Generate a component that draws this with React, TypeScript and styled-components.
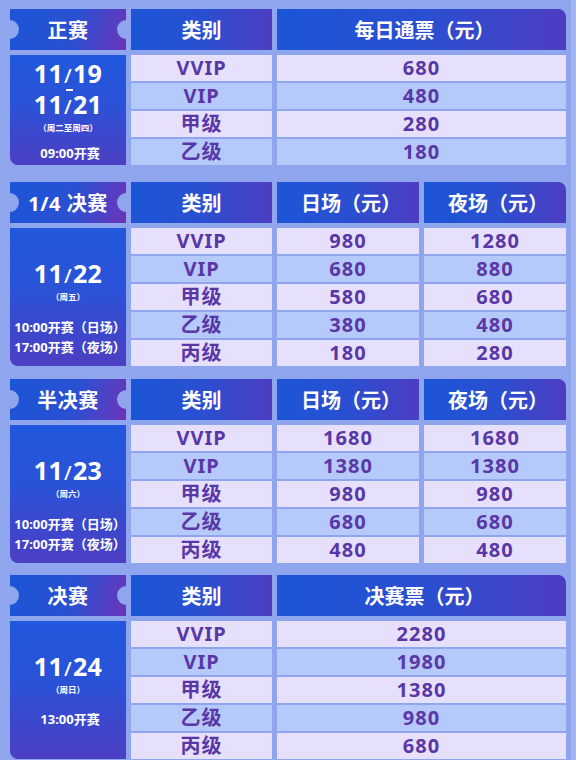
import React from "react";
import styled, { createGlobalStyle } from "styled-components";

const GlobalStyle = createGlobalStyle`
  html, body {
    margin: 0;
    padding: 0;
    background: #a4b5f4;
  }
  body {
    font-family: "Noto Sans", "Noto Sans CJK SC", sans-serif;
  }
`;

const PANEL = "#8fa5ee";

const Page = styled.div`
  width: 571px;
  min-height: 760px;
  background: ${PANEL};
  padding: 9px 5px 0 10px;
  box-sizing: border-box;
  overflow: hidden;
`;

const Section = styled.section<{ $cols: number; $rows: number; $gapAfter: number }>`
  display: grid;
  grid-template-columns: 116px 141px repeat(${(p) => p.$cols}, 1fr);
  grid-template-rows: 44px repeat(${(p) => p.$rows}, 26px);
  column-gap: 5px;
  row-gap: 2px;
  margin-bottom: ${(p) => p.$gapAfter}px;
`;

const Tab = styled.div`
  position: relative;
  overflow: hidden;
  margin-bottom: 3px;
  display: flex;
  align-items: center;
  justify-content: center;
  background: linear-gradient(105deg, #1c55d7 0%, #2a50d2 55%, #5a3cc0 88%, #6b34b6 100%);
  color: #fff;
  font-family: "Noto Sans CJK SC", sans-serif;
  font-weight: 700;
  font-size: 20px;
  letter-spacing: 0.5px;
  &::before,
  &::after {
    content: "";
    position: absolute;
    top: 50%;
    width: 19px;
    height: 19px;
    margin-top: -9.5px;
    border-radius: 50%;
    background: ${PANEL};
  }
  &::before {
    left: -10px;
  }
  &::after {
    right: -10px;
  }
`;

const TabLabel = styled.span`
  font-family: "Noto Sans", "Noto Sans CJK SC", sans-serif;
`;

const HeadCell = styled.div<{ $last?: boolean; $pad?: boolean }>`
  margin-bottom: 3px;
  display: flex;
  align-items: center;
  justify-content: center;
  background: linear-gradient(90deg, #1c55d7 0%, #2a4fd1 50%, #4d3dc2 100%);
  color: #fff;
  font-family: "Noto Sans CJK SC", sans-serif;
  font-weight: 700;
  font-size: 20px;
  border-top-right-radius: ${(p) => (p.$last ? "8px" : "0")};
  padding-left: ${(p) => (p.$pad ? "6px" : "0")};
`;

const DateBlock = styled.div<{ $rows: number; $padTop: number }>`
  grid-column: 1;
  grid-row: 2 / span ${(p) => p.$rows};
  display: flex;
  flex-direction: column;
  align-items: center;
  padding-top: ${(p) => p.$padTop}px;
  background: linear-gradient(180deg, #2158dd 0%, #2b52d7 45%, #3d47cc 75%, #4c3fc2 100%);
  border-bottom-left-radius: 8px;
  color: #fff;
`;

const DateLine = styled.div`
  font-family: "Noto Sans", sans-serif;
  font-weight: 700;
  font-size: 25px;
  line-height: 26px;
  letter-spacing: 0.3px;
`;

const Slash = styled.span`
  font-size: 20px;
  font-weight: 500;
  margin: 0 1px;
`;

const Dash = styled.div`
  width: 7px;
  height: 2px;
  background: #fff;
  margin: 0 0 0 2px;
`;

const Week = styled.div`
  font-family: "Noto Sans CJK SC", sans-serif;
  font-weight: 700;
  font-size: 8.5px;
  line-height: 12px;
  margin-top: 1px;
`;

const Times = styled.div<{ $gap: number }>`
  margin-top: ${(p) => p.$gap}px;
  display: flex;
  flex-direction: column;
  align-items: center;
`;

const TimeLine = styled.div`
  font-family: "Noto Sans", "Noto Sans CJK SC", sans-serif;
  font-weight: 700;
  font-size: 13px;
  line-height: 20px;
  white-space: nowrap;
  margin-left: 4px;
`;

const Cell = styled.div<{ $alt: boolean }>`
  display: flex;
  align-items: center;
  justify-content: center;
  background: ${(p) => (p.$alt ? "#b6c9fb" : "#e6e0fd")};
  color: #5937a7;
  font-family: "Noto Sans", "Noto Sans CJK SC", sans-serif;
  font-weight: 700;
  font-size: 20px;
  letter-spacing: 1px;
  line-height: 26px;
`;

type Sec = {
  tab: string;
  heads: string[];
  dates: string[];
  week: string;
  times: string[];
  rows: string[][];
  padTop: number;
  timesGap: number;
  gapAfter: number;
};

const sections: Sec[] = [
  {
    tab: "正赛",
    heads: ["每日通票（元）"],
    dates: ["11/19", "11/21"],
    week: "（周二至周四）",
    times: ["09:00开赛"],
    rows: [
      ["VVIP", "680"],
      ["VIP", "480"],
      ["甲级", "280"],
      ["乙级", "180"],
    ],
    padTop: 5,
    timesGap: 10,
    gapAfter: 17,
  },
  {
    tab: "1/4 决赛",
    heads: ["日场（元）", "夜场（元）"],
    dates: ["11/22"],
    week: "（周五）",
    times: ["10:00开赛（日场）", "17:00开赛（夜场）"],
    rows: [
      ["VVIP", "980", "1280"],
      ["VIP", "680", "880"],
      ["甲级", "580", "680"],
      ["乙级", "380", "480"],
      ["丙级", "180", "280"],
    ],
    padTop: 32,
    timesGap: 15,
    gapAfter: 13,
  },
  {
    tab: "半决赛",
    heads: ["日场（元）", "夜场（元）"],
    dates: ["11/23"],
    week: "（周六）",
    times: ["10:00开赛（日场）", "17:00开赛（夜场）"],
    rows: [
      ["VVIP", "1680", "1680"],
      ["VIP", "1380", "1380"],
      ["甲级", "980", "980"],
      ["乙级", "680", "680"],
      ["丙级", "480", "480"],
    ],
    padTop: 32,
    timesGap: 15,
    gapAfter: 12,
  },
  {
    tab: "决赛",
    heads: ["决赛票（元）"],
    dates: ["11/24"],
    week: "（周日）",
    times: ["13:00开赛"],
    rows: [
      ["VVIP", "2280"],
      ["VIP", "1980"],
      ["甲级", "1380"],
      ["乙级", "980"],
      ["丙级", "680"],
    ],
    padTop: 32,
    timesGap: 14,
    gapAfter: 0,
  },
];

function renderDate(d: string) {
  const [a, b] = d.split("/");
  return (
    <>
      {a}
      <Slash>/</Slash>
      {b}
    </>
  );
}

export default function App() {
  return (
    <>
      <GlobalStyle />
      <Page>
        {sections.map((s) => (
          <Section key={s.tab} $cols={s.heads.length} $rows={s.rows.length} $gapAfter={s.gapAfter}>
            <Tab>
              <TabLabel>{s.tab}</TabLabel>
            </Tab>
            <HeadCell>类别</HeadCell>
            {s.heads.map((h, i) => (
              <HeadCell key={h + i} $pad $last={i === s.heads.length - 1}>
                {h}
              </HeadCell>
            ))}
            <DateBlock $rows={s.rows.length} $padTop={s.padTop}>
              {s.dates.map((d, i) => (
                <React.Fragment key={d}>
                  {i > 0 && <Dash />}
                  <DateLine>{renderDate(d)}</DateLine>
                </React.Fragment>
              ))}
              <Week>{s.week}</Week>
              <Times $gap={s.timesGap}>
                {s.times.map((t) => (
                  <TimeLine key={t}>{t}</TimeLine>
                ))}
              </Times>
            </DateBlock>
            {s.rows.map((r, ri) =>
              r.map((c, ci) => (
                <Cell key={`${ri}-${ci}`} $alt={ri % 2 === 1}>
                  {c}
                </Cell>
              ))
            )}
          </Section>
        ))}
      </Page>
    </>
  );
}
